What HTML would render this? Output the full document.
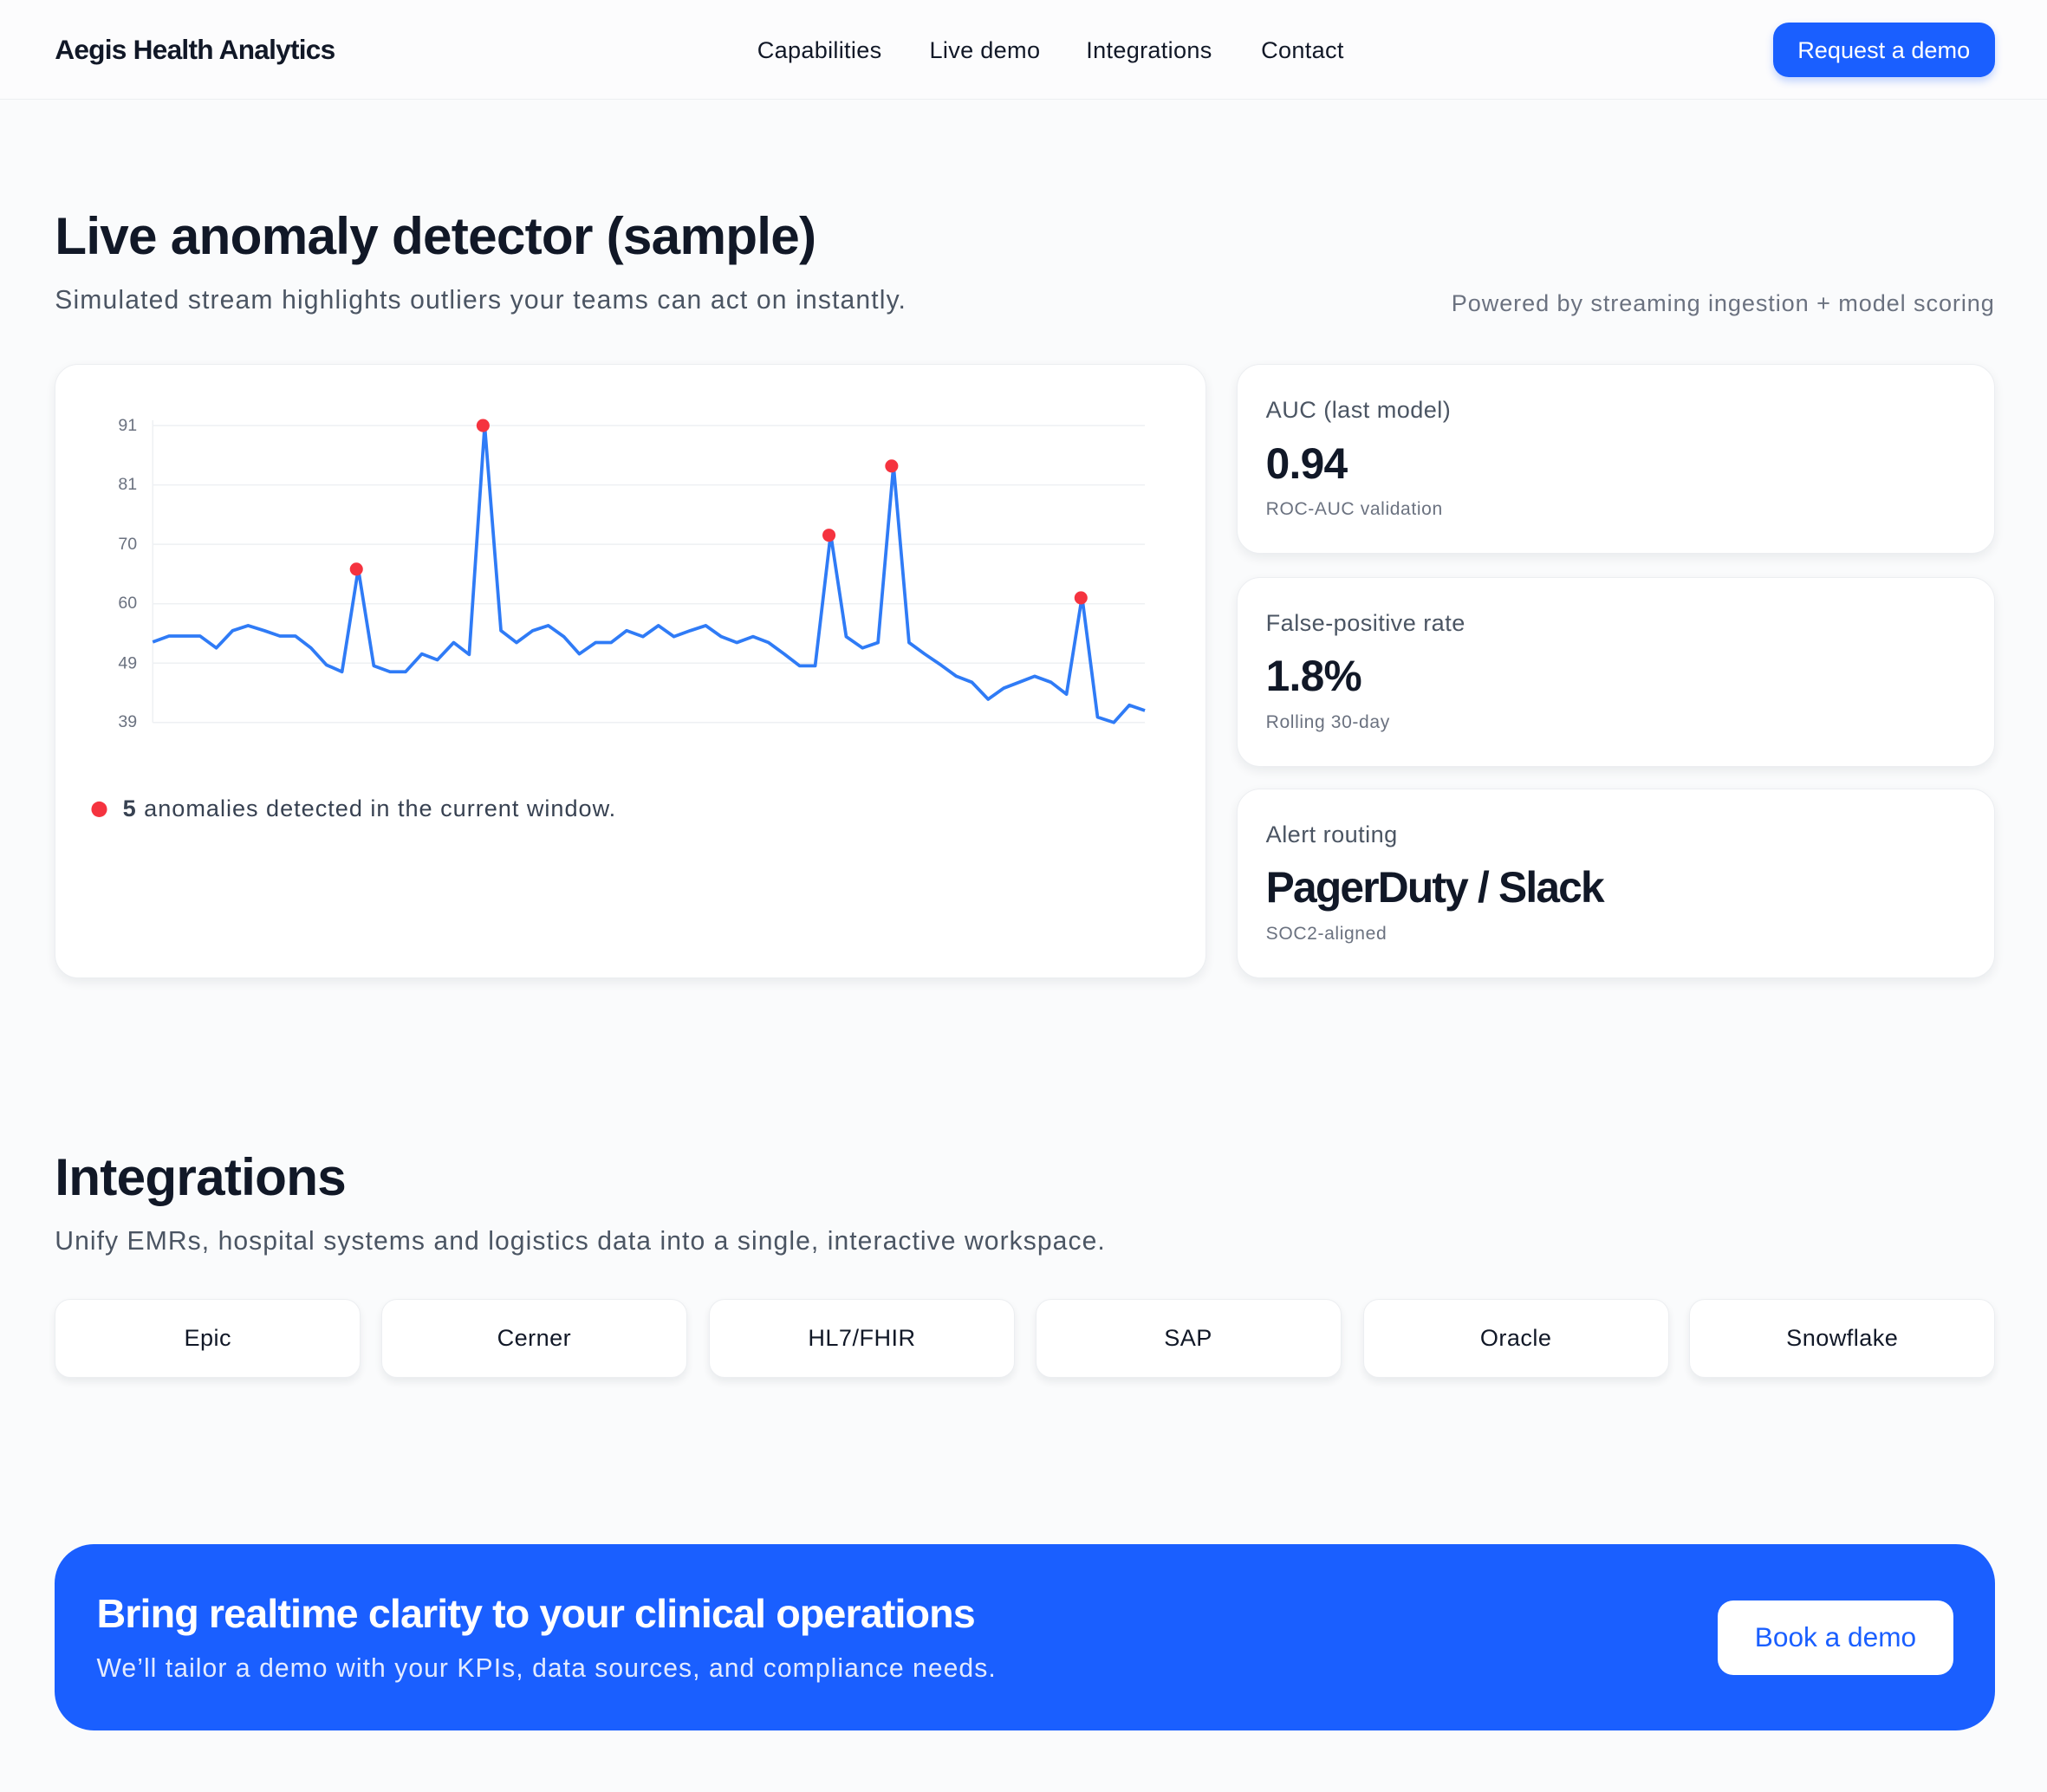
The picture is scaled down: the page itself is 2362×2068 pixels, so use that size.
<!DOCTYPE html>
<html><head><meta charset="utf-8"><style>
html,body{margin:0;padding:0}
body{width:1568px;height:1373px;zoom:1.50638;background:#fafbfc;font-family:"Liberation Sans",sans-serif;color:#111827;position:relative;overflow:hidden}
.abs{position:absolute}
nav{position:absolute;left:0;top:0;width:1568px;height:76px;background:#fcfcfd;border-bottom:1px solid #eceef1}
.logo{left:42px;top:26px;font-size:21px;font-weight:bold;letter-spacing:-0.5px}
.nl{top:28px;font-size:18px;color:#111827;letter-spacing:0.2px}
.btn{left:1358px;top:17px;width:170px;height:42px;background:#1a5fff;border-radius:12px;color:#fff;font-size:18px;line-height:42px;text-align:center;box-shadow:0 3px 6px rgba(26,95,255,.25)}
h1,h2{margin:0;position:absolute;font-weight:bold;letter-spacing:-0.5px}
.card{position:absolute;background:#fff;border:1px solid #eceef1;border-radius:18px;box-shadow:0 3px 8px rgba(17,24,39,.07)}
.lab{position:absolute;left:22px;font-size:18px;color:#4b5563;letter-spacing:0.3px}
.val{position:absolute;left:22px;font-size:33px;font-weight:bold;letter-spacing:-0.5px}
.sub{position:absolute;left:22px;font-size:14px;color:#6b7280;letter-spacing:0.4px}
.pill{position:absolute;top:995px;width:233px;height:59px;background:#fff;border:1px solid #eceef1;border-radius:12px;box-shadow:0 3px 6px rgba(17,24,39,.07);text-align:center;line-height:59px;font-size:18px;letter-spacing:0.3px}
</style></head><body>
<nav>
<div class="abs logo">Aegis Health Analytics</div>
<div class="abs nl" style="left:580px">Capabilities</div>
<div class="abs nl" style="left:712px">Live demo</div>
<div class="abs nl" style="left:832px">Integrations</div>
<div class="abs nl" style="left:966px">Contact</div>
<div class="abs btn">Request a demo</div>
</nav>

<h1 style="left:42px;top:157px;font-size:40px">Live anomaly detector (sample)</h1>
<div class="abs" style="left:42px;top:219px;font-size:20px;color:#4b5563;letter-spacing:0.75px">Simulated stream highlights outliers your teams can act on instantly.</div>
<div class="abs" style="right:40px;top:222px;font-size:18px;color:#6b7280;letter-spacing:0.6px">Powered by streaming ingestion + model scoring</div>

<div class="card" style="left:42px;top:279px;width:881px;height:469px"></div>
<svg class="abs" style="left:0;top:0" width="1568" height="1373" viewBox="0 0 1568 1373">
<g stroke="#eef0f3" stroke-width="1">
<line x1="117" x2="877" y1="326" y2="326"/><line x1="117" x2="877" y1="371.5" y2="371.5"/><line x1="117" x2="877" y1="417" y2="417"/><line x1="117" x2="877" y1="462.5" y2="462.5"/><line x1="117" x2="877" y1="508" y2="508"/><line x1="117" x2="877" y1="553.5" y2="553.5"/><line x1="117" x2="117" y1="322" y2="553.5"/>
</g>
<g font-size="13" fill="#6b7280" text-anchor="end" font-family="Liberation Sans,sans-serif">
<text x="105" y="330">91</text><text x="105" y="375">81</text><text x="105" y="421">70</text><text x="105" y="466">60</text><text x="105" y="512">49</text><text x="105" y="557">39</text>
</g>
<g transform="translate(117,326) scale(0.5663,0.2284) translate(-133,-209)">
<polyline fill="none" stroke="#2f7bf6" stroke-width="2.5" vector-effect="non-scaling-stroke" stroke-linejoin="round" points="133,935 155,915 197,915 219,955 241,897 262,880 284,897 305,915 326,915 347,955 368,1012 389,1035 411,690 432,1015 454,1035 475,1035 497,975 518,995 540,937 561,977 582,209 604,897 625,937 647,897 668,880 689,917 710,975 732,937 753,937 774,897 796,917 817,880 838,917 860,897 881,880 902,917 923,937 945,917 966,937 987,975 1008,1015 1029,1015 1050,573 1071,917 1093,955 1114,937 1135,343 1156,937 1177,975 1199,1012 1220,1050 1241,1070 1263,1127 1284,1090 1305,1070 1326,1050 1348,1070 1369,1110 1390,783 1411,1187 1433,1205 1454,1147 1475,1165"/>
</g>
<g fill="#f5333f">
<circle cx="273" cy="436" r="5"/><circle cx="370" cy="326" r="5"/><circle cx="635" cy="410" r="5"/><circle cx="683" cy="357" r="5"/><circle cx="828" cy="458" r="5"/>
<circle cx="76" cy="620" r="6"/>
</g>
</svg>
<div class="abs" style="left:94px;top:609px;font-size:18px;color:#374151;letter-spacing:0.65px"><b>5</b> anomalies detected in the current window.</div>

<div class="card" style="left:947px;top:279px;width:580px;height:144px">
<div class="lab" style="top:24px">AUC (last model)</div>
<div class="val" style="top:56px">0.94</div>
<div class="sub" style="top:103px">ROC-AUC validation</div>
</div>
<div class="card" style="left:947px;top:442px;width:580px;height:144px">
<div class="lab" style="top:24px">False-positive rate</div>
<div class="val" style="top:56px">1.8%</div>
<div class="sub" style="top:103px">Rolling 30-day</div>
</div>
<div class="card" style="left:947px;top:604px;width:580px;height:144px">
<div class="lab" style="top:24px">Alert routing</div>
<div class="val" style="top:56px;letter-spacing:-1.2px">PagerDuty / Slack</div>
<div class="sub" style="top:103px">SOC2-aligned</div>
</div>

<h2 style="left:42px;top:878px;font-size:40px">Integrations</h2>
<div class="abs" style="left:42px;top:940px;font-size:20px;color:#4b5563;letter-spacing:0.7px">Unify EMRs, hospital systems and logistics data into a single, interactive workspace.</div>
<div class="pill" style="left:42px">Epic</div>
<div class="pill" style="left:292px">Cerner</div>
<div class="pill" style="left:543px">HL7/FHIR</div>
<div class="pill" style="left:793px">SAP</div>
<div class="pill" style="left:1044px">Oracle</div>
<div class="pill" style="left:1294px">Snowflake</div>

<div class="abs" style="left:42px;top:1183px;width:1486px;height:143px;background:#1a5fff;border-radius:30px">
<div class="abs" style="left:32px;top:35px;font-size:31px;font-weight:bold;color:#fff;letter-spacing:-0.6px">Bring realtime clarity to your clinical operations</div>
<div class="abs" style="left:32px;top:84px;font-size:20px;color:#e3ebff;letter-spacing:0.7px">We’ll tailor a demo with your KPIs, data sources, and compliance needs.</div>
<div class="abs" style="left:1274px;top:43px;width:180px;height:57px;background:#fff;border-radius:12px;color:#1a5fff;font-size:21px;line-height:57px;text-align:center">Book a demo</div>
</div>
</body></html>
